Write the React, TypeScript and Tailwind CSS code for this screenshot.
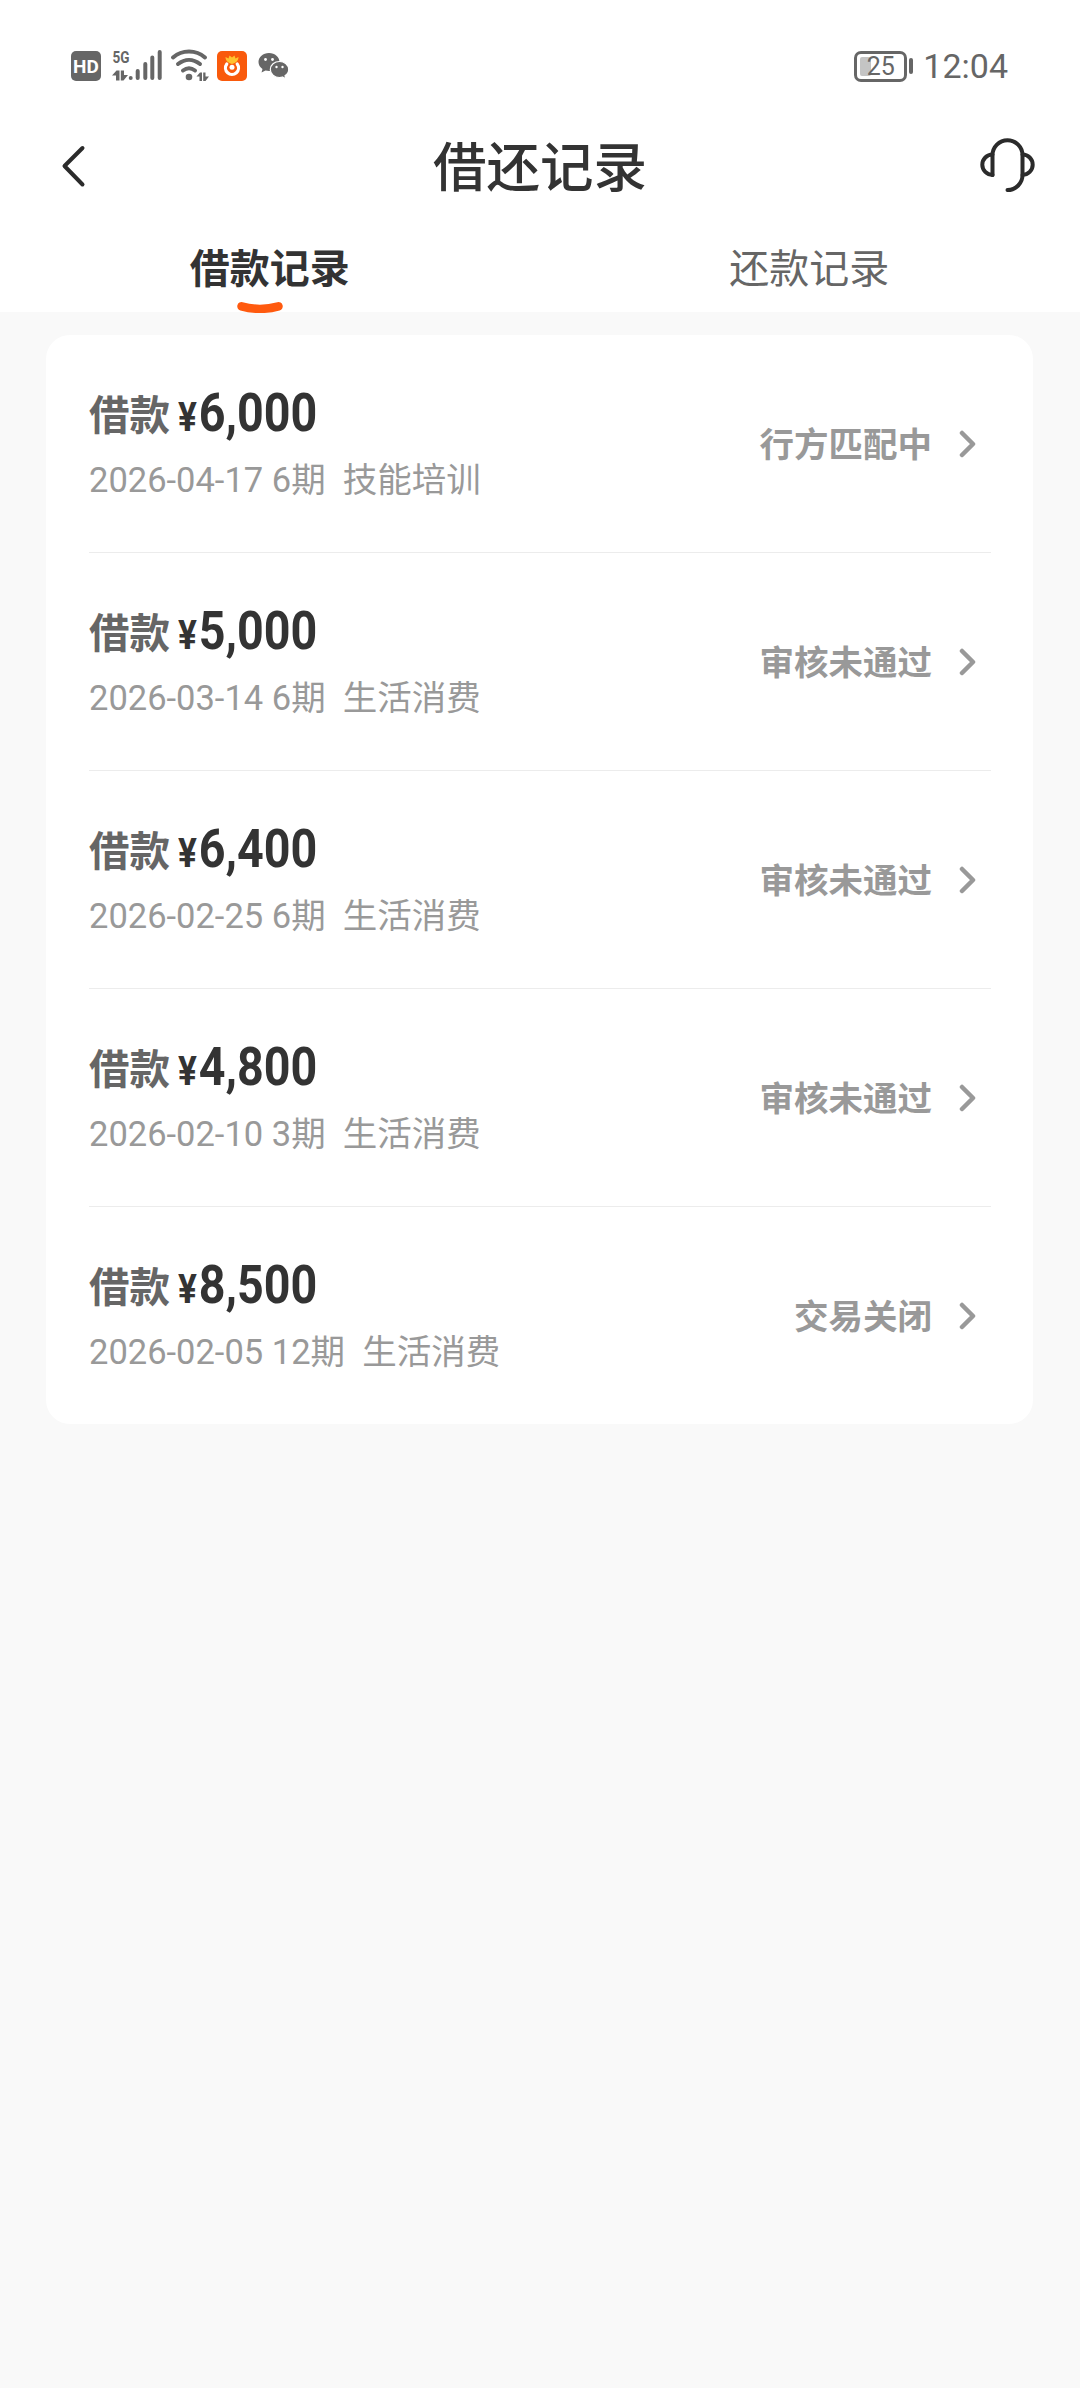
import React from "react";

interface LoanRecord {
  amount: string;
  date: string;
  term: string;
  purpose: string;
  status: string;
}

const records: LoanRecord[] = [
  { amount: "6,000", date: "2026-04-17", term: "6期", purpose: "技能培训", status: "行方匹配中" },
  { amount: "5,000", date: "2026-03-14", term: "6期", purpose: "生活消费", status: "审核未通过" },
  { amount: "6,400", date: "2026-02-25", term: "6期", purpose: "生活消费", status: "审核未通过" },
  { amount: "4,800", date: "2026-02-10", term: "3期", purpose: "生活消费", status: "审核未通过" },
  { amount: "8,500", date: "2026-02-05", term: "12期", purpose: "生活消费", status: "交易关闭" },
];

const SignalIcon = () => (
  <svg className="overflow-visible" width="52" height="34" viewBox="0 0 52 34" fill="#666">
    <text x="0.5" y="14" fontSize="17" fontWeight="700" textLength="17" lengthAdjust="spacingAndGlyphs">
      5G
    </text>
    <path d="M0 26.5 L4.5 21.5 H7.5 V31.5 H4 V26.5Z M8.8 21.5 H12 V26 H16 L11.5 31.5 H8.8Z" />
    <path
      d="M18.7 29v.1M25.7 22v7M33.3 15v14M40.3 8.5v20.5M47.7 3v26"
      stroke="#666"
      strokeWidth="4"
      strokeLinecap="round"
    />
  </svg>
);

const WifiIcon = () => (
  <svg width="39" height="34" viewBox="0 0 39 34" fill="none" stroke="#666" strokeWidth="4" strokeLinecap="round">
    <path d="M3 8.5C12 .5 26 .5 35 8.5M8 15C15 9.5 23 9.5 30 15M13 21.5C17 18.5 21 18.5 25 21.5" />
    <circle cx="19" cy="28" r="3.3" fill="#666" stroke="none" />
    <path d="M26.5 27.5 L30 23.5 H32 V32 H29.5 V27.5Z M33.2 23.5 H35.5 V27.5 H39 L35.5 32 H33.2Z" fill="#666" stroke="none" />
  </svg>
);

const AppBadge = () => (
  <svg width="30" height="30" viewBox="0 0 30 30">
    <rect width="30" height="30" rx="5" fill="#f95a0c" />
    <path
      d="M15 13 C11 12 8.5 9.5 8.5 6 L11.5 7.5 L12.5 4.5 L15 6.5 L17.5 4.5 L18.5 7.5 L21.5 6 C21.5 9.5 19 12 15 13Z"
      fill="#ffc22e"
    />
    <path d="M9.8 13 A6.5 6.5 0 1 0 20.2 13" fill="none" stroke="#fff" strokeWidth="3.2" strokeLinecap="round" />
    <circle cx="15" cy="16.3" r="2.5" fill="#fff" />
  </svg>
);

const WechatIcon = () => (
  <svg width="31" height="28" viewBox="0 0 31 28" fill="#666">
    <path d="M11 1C5 1 .5 5 .5 10c0 3 1.5 5.300 4 7L3.5 20.5l4-2c1.2.3 2.3.5 3.5.5 6 0 10.5-4 10.5-9S17 1 11 1Z" />
    <path
      d="M21.5 9.5c-5 0-9.2 3.5-9.2 8s4.2 8 9.2 8c1 0 2-.2 3-.5l3.5 2-1-3.2c2.2-1.5 3.7-3.7 3.7-6.3 0-4.5-4.2-8-9.2-8Z"
      stroke="#fff"
      strokeWidth="1.2"
    />
    <g fill="#fff">
      <circle cx="7.5" cy="7.5" r="1.4" />
      <circle cx="14.5" cy="7.5" r="1.4" />
      <circle cx="18.5" cy="15" r="1.2" />
      <circle cx="24.5" cy="15" r="1.2" />
    </g>
  </svg>
);

const StatusBar = () => (
  <div className="flex h-[130px] items-start justify-between pt-[49px] pr-[72px] pl-[71px] text-[#666]">
    <div className="flex h-[34px] items-center">
      <div className="flex h-[30px] w-[30px] items-center justify-center rounded-[5px] bg-[#666] text-[19px] leading-none font-bold text-white">
        HD
      </div>
      <div className="ml-[11px]">
        <SignalIcon />
      </div>
      <div className="ml-[6px]">
        <WifiIcon />
      </div>
      <div className="ml-[8px]">
        <AppBadge />
      </div>
      <div className="ml-[11px]">
        <WechatIcon />
      </div>
    </div>
    <div className="flex h-[34px] items-center">
      <div className="relative flex h-[31px] w-[53px] items-center justify-center rounded-[7px] border-[3px] border-[#666] text-[25px] leading-none">
        <div className="absolute top-[3px] left-[3px] h-[19px] w-[11px] rounded-[2px] bg-[#c4c4c4]" />
        <span className="relative">25</span>
      </div>
      <div className="ml-[2px] h-[16px] w-[4px] rounded-[2px] bg-[#666]" />
      <span className="ml-[10px] text-[34px] leading-none font-[450]">12:04</span>
    </div>
  </div>
);

const Header = () => (
  <div className="grid h-[72px] grid-cols-[1fr_auto_1fr] items-center px-[45px]">
    <svg className="ml-[15px]" width="40" height="44" viewBox="0 0 40 44" fill="none">
      <path d="M22.5 4L4.5 22L22.5 40.5" stroke="#2b2b2b" strokeWidth="4" strokeLinecap="round" strokeLinejoin="round" />
    </svg>
    <h1 className="pt-[5px] text-[53.5px] leading-none font-medium text-[#333]">借还记录</h1>
    <svg
      className="justify-self-end"
      width="56"
      height="56"
      viewBox="0 0 56 56"
      fill="none"
      stroke="#2b2b2b"
      strokeWidth="4"
      strokeLinecap="round"
    >
      <path d="M13.5 37V17.2a15 15 0 0 1 30 0v19.5a15 15 0 0 1-15 15.3" />
      <path d="M13.5 16.5a10.2 10.2 0 0 0 0 20.4M43.5 16.5a10.2 10.2 0 0 1 0 20.4" />
    </svg>
  </div>
);

const Tabs = () => (
  <div className="flex h-[110px] pt-[48px] text-[40px] leading-none">
    <div className="relative flex-1 text-center font-bold text-[#333]">
      借款记录
      <svg className="absolute top-[49px] left-[236px]" width="48" height="14" viewBox="0 0 48 14" fill="none">
        <path d="M5.5 7.3Q24 12.5 42.5 7.3" stroke="#ff5a0f" strokeWidth="8.5" strokeLinecap="round" />
      </svg>
    </div>
    <div className="flex-1 pr-[1px] text-center text-[#666]">还款记录</div>
  </div>
);

const RecordRow: React.FC<{ record: LoanRecord }> = ({ record }) => (
  <div className="flex h-[218px] items-center justify-between border-b border-[#ececec] pr-[14px] last:h-[217px] last:border-b-0">
    <div className="flex flex-col">
      <div className="flex h-[56px] items-baseline">
        <span className="relative -top-px text-[40.5px] leading-[56px] font-bold text-[#666]">借款</span>
        <span className="ml-[8px] inline-block origin-left scale-x-[0.88] text-[53px] leading-[56px] font-bold whitespace-nowrap text-[#333]">
          <span className="mr-[2px] text-[40px]">¥</span>
          {record.amount}
        </span>
      </div>
      <div className="mt-[17px] flex h-[44px] items-center text-[34.5px] leading-[44px] whitespace-pre text-[#999]">
        {record.date} {record.term}{"  "}{record.purpose}
      </div>
    </div>
    <div className="flex items-center">
      <span className="pt-[2px] text-[34.5px] leading-[50px] font-bold text-[#999]">{record.status}</span>
      <svg className="ml-[27px]" width="18" height="30" viewBox="0 0 18 30" fill="none">
        <path d="M3 4L14 15L3 26" stroke="#999" strokeWidth="4.5" strokeLinecap="round" strokeLinejoin="round" />
      </svg>
    </div>
  </div>
);

const App: React.FC = () => {
  return (
    <div className="min-h-[2388px] w-full bg-[#f9f9f9] font-[Roboto,'Noto_Sans_CJK_SC',sans-serif]">
      <div className="bg-white">
        <StatusBar />
        <Header />
        <Tabs />
      </div>
      <div className="mr-[47px] ml-[46px] mt-[23px] rounded-[24px] bg-white pr-[42px] pl-[43px]">
        {records.map((record, index) => (
          <RecordRow key={index} record={record} />
        ))}
      </div>
    </div>
  );
};

export default App;
